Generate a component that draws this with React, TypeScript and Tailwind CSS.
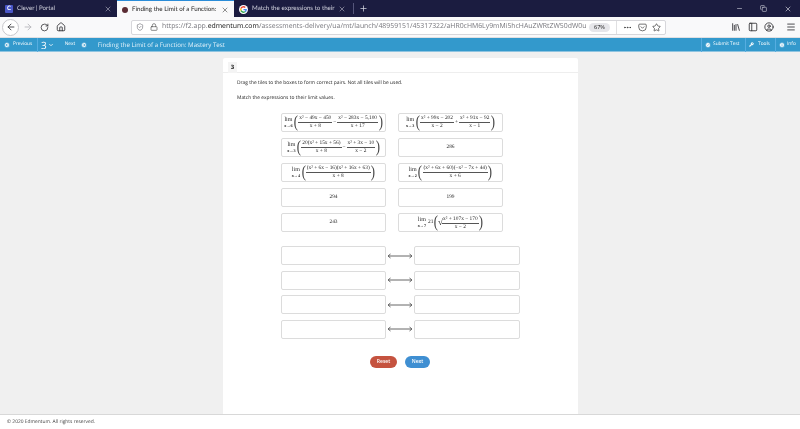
import React from "react";
import { ArrowLeft, ArrowRight, RotateCw, Home, Lock, ShieldCheck, Star, Menu, Minus, X, Plus, Copy, ChevronDown, Wrench, Info, CircleArrowLeft, CircleArrowRight, CircleCheck, CircleUser, PanelLeft, Library, Ellipsis, Pocket } from "lucide-react";

const serif = "font-['Liberation_Serif',serif]";

function Frac({ n, d }: { n: string; d: string }) {
  return (
    <span className="inline-flex flex-col items-center leading-[7px]">
      <span className="border-b border-[#555] px-[1px] whitespace-nowrap">{n}</span>
      <span className="whitespace-nowrap">{d}</span>
    </span>
  );
}

function Lim({ to }: { to: string }) {
  return (
    <span className="inline-flex flex-col items-center leading-[5px] shrink-0 mr-[1px]">
      <span className="text-[6px] leading-[6px]">lim</span>
      <span className="text-[4.2px] whitespace-nowrap font-semibold">{`x→${to}`}</span>
    </span>
  );
}

function Paren({ children }: { children: React.ReactNode }) {
  return (
    <span className="inline-flex items-center">
      <span className="text-[17px] leading-none font-thin scale-x-75 -mt-[2px] -mx-[0.5px] text-[#444]">(</span>
      {children}
      <span className="text-[17px] leading-none font-thin scale-x-75 -mt-[2px] -mx-[0.5px] text-[#444]">)</span>
    </span>
  );
}

function Tile({ children }: { children?: React.ReactNode }) {
  return (
    <div className={`w-[105px] h-[19px] shrink-0 rounded-[2px] border-[1.5px] border-[#dcdcdc] bg-white flex items-center justify-center text-[5.4px] text-[#2a2a2a] ${serif} overflow-hidden`}>
      {children}
    </div>
  );
}

function DropBox({ wide }: { wide?: boolean }) {
  return <div className={`${wide ? "w-[106px]" : "w-[105px]"} h-[19px] rounded-[2px] border-[1.5px] border-[#dcdcdc] bg-white`} />;
}

function Tab({ active, icon, label }: { active?: boolean; icon: React.ReactNode; label: string }) {
  return (
    <div className={`w-[117px] h-[18px] flex items-center pl-[5px] pr-[5px] gap-[4px] text-[6.2px] font-['Lato',sans-serif] ${active ? "bg-[#f9f9fa] text-[#222] border-t border-[#2a8cd8]" : "text-[#d4d5e0]"}`}>
      {icon}
      <span className="flex-1 min-w-0 whitespace-nowrap">{label}</span>
      <X size={8} strokeWidth={1.5} className="shrink-0" />
    </div>
  );
}

function BarSep() {
  return <span className="w-px h-[14px] bg-[#56ade0]" />;
}

function GoogleMark() {
  return (
    <svg width="9" height="9" viewBox="0 0 24 24" className="shrink-0">
      <circle cx="12" cy="12" r="12" fill="#fff" />
      <path d="M21 12.300c0-.7-.1-1.300-.2-1.900H12v3.600h5c-.2 1.200-.9 2.100-1.900 2.800l3 2.300c1.800-1.600 2.900-4 2.900-6.800z" fill="#4285f4" />
      <path d="M12 21c2.500 0 4.500-.8 6.100-2.200l-3-2.300c-.8.600-1.900.9-3.100.9-2.400 0-4.400-1.600-5.100-3.800l-3 2.400C5.400 19 8.500 21 12 21z" fill="#34a853" />
      <path d="M6.900 13.600c-.4-1.100-.4-2.200 0-3.300l-3-2.400a9 9 0 0 0 0 8.100z" fill="#fbbc05" />
      <path d="M12 6.600c1.300 0 2.500.5 3.400 1.300l2.600-2.600A9 9 0 0 0 3.900 7.900l3 2.400c.7-2.100 2.700-3.700 5.100-3.700z" fill="#ea4335" />
    </svg>
  );
}

const dot = { size: 6, fill: "white", color: "#3399cc", strokeWidth: 2.5 };

export default function App() {
  return (
    <div className="w-[800px] h-[429px] flex flex-col overflow-hidden bg-[#f0f0f0] font-['Open_Sans',sans-serif] [text-rendering:geometricPrecision] blur-[0.3px]">
      <div className="h-[17px] bg-[#1b1c40] flex items-start shrink-0 text-[#d4d5e0]">
        <Tab icon={<span className="w-[8px] h-[8px] bg-[#4a56c8] rounded-[1px] text-white text-[6px] leading-[8px] text-center font-bold shrink-0">C</span>} label="Clever | Portal" />
        <Tab active icon={<span className="w-[6px] h-[6px] rounded-full bg-[#5a2b33] shrink-0" />} label="Finding the Limit of a Function:" />
        <Tab icon={<GoogleMark />} label="Match the expressions to their" />
        <div className="w-px h-[11px] bg-[#55567a] mt-[3px] ml-[2px]" />
        <Plus size={9} className="ml-[5px] mt-[4px]" />
        <div className="flex-1" />
        <div className="flex items-center gap-[17px] pr-[8px] h-[17px]">
          <Minus size={7} />
          <Copy size={7} />
          <X size={8} />
        </div>
      </div>

      <div className="h-[21px] bg-[#f9f9fa] flex items-center shrink-0 text-[#2a2a2e] border-b border-[#e0e0e2]">
        <span className="ml-[2px] w-[17px] h-[17px] rounded-full border border-[#c8c8cc] bg-white flex items-center justify-center">
          <ArrowLeft size={10} />
        </span>
        <ArrowRight size={10} className="ml-[4px] text-[#b3b3b8]" />
        <RotateCw size={9} className="ml-[7px]" />
        <Home size={10} className="ml-[7px]" />
        <div className="ml-[65px] w-[535px] h-[15px] bg-white border border-[#d7d7db] rounded-[2px] flex items-center pl-[3px] text-[6.9px] text-[#77777d] whitespace-nowrap overflow-hidden">
          <ShieldCheck size={8} className="ml-[1px] shrink-0" />
          <Lock size={8} className="ml-[6px] shrink-0 text-[#555]" />
          <span className="ml-[4px] w-[424px]">
            https://f2.app.<span className="text-[#111]">edmentum.com</span>/assessments-delivery/ua/mt/launch/48959151/45317322/aHR0cHM6Ly9mMi5hcHAuZWRtZW50dW0u
          </span>
          <span className="ml-[3px] w-[21px] h-[9px] rounded-full bg-[#e6e6ea] text-[5.5px] leading-[9px] text-center text-[#222] shrink-0">67%</span>
          <span className="ml-[6px] w-px h-[13px] bg-[#e0e0e2] shrink-0" />
          <Ellipsis size={9} className="ml-[6px] shrink-0 text-[#333]" />
          <Pocket size={9} className="ml-[6px] shrink-0 text-[#444]" />
          <Star size={9} className="ml-[5px] shrink-0 text-[#444]" />
        </div>
        <Library size={10} className="ml-[65px]" />
        <PanelLeft size={10} className="ml-[7px]" />
        <CircleUser size={10} className="ml-[6px]" />
        <Menu size={10} className="ml-[12px]" />
      </div>

      <div className="h-[14px] bg-[#3399cc] flex items-center shrink-0 text-white text-[4.8px] border-b border-[#8fc4e0]">
        <CircleArrowLeft {...dot} className="ml-[4px]" />
        <span className="ml-[3px] w-[24px]">Previous</span>
        <BarSep />
        <span className="ml-[3px] text-[10px] leading-none">3</span>
        <ChevronDown size={6} className="ml-[1px]" strokeWidth={3} />
        <span className="ml-[5px]"><BarSep /></span>
        <span className="ml-[6px] w-[15px]">Next</span>
        <CircleArrowRight {...dot} className="ml-[1px]" />
        <span className="ml-[1px]"><BarSep /></span>
        <span className="ml-[10px] text-[6.2px] text-[#e3f2fa]">Finding the Limit of a Function: Mastery Test</span>
        <div className="flex-1" />
        <BarSep />
        <CircleCheck {...dot} className="ml-[3px]" />
        <span className="ml-[2px] w-[32px]">Submit Test</span>
        <BarSep />
        <Wrench size={5} fill="white" className="ml-[3px]" />
        <span className="ml-[4px] w-[17px]">Tools</span>
        <BarSep />
        <Info {...dot} className="ml-[3px]" />
        <span className="ml-[2px] w-[13px]">Info</span>
      </div>

      <main className="flex-1 flex justify-center pt-[6px] pl-[1px] min-h-0">
        <section className="w-[355px] h-[356px] bg-white rounded-t-[2px] flex flex-col">
          <div className="h-[15px] border-b border-[#eeeeee] pl-[5px] pt-[4px] shrink-0">
            <div className="w-[9px] h-[11px] bg-[#f4f4f4] text-[6px] font-bold text-[#222] text-center leading-[11px]">3</div>
          </div>
          <p className="ml-[14px] mt-[6px] text-[4.9px] leading-[8px] text-[#222]">Drag the tiles to the boxes to form correct pairs. Not all tiles will be used.</p>
          <p className="ml-[14px] mt-[7px] text-[4.9px] leading-[8px] text-[#222]">Match the expressions to their limit values.</p>

          <div className="ml-[58px] mt-[11px] grid grid-cols-[105px_105px] gap-x-[12px] gap-y-[6px]">
            <Tile>
              <Lim to="6" />
              <Paren>
                <Frac n="x² − 49x − 450" d="x + 8" />
                <span className="mx-[1px]">−</span>
                <Frac n="x² − 283x − 5,100" d="x + 17" />
              </Paren>
            </Tile>
            <Tile>
              <Lim to="3" />
              <Paren>
                <Frac n="x² + 99x − 202" d="x − 2" />
                <span className="mx-[1px]">+</span>
                <Frac n="x² + 91x − 92" d="x − 1" />
              </Paren>
            </Tile>
            <Tile>
              <Lim to="3" />
              <Paren>
                <Frac n="20(x² + 15x + 56)" d="x + 8" />
                <span className="mx-[1px]">−</span>
                <Frac n="x² + 3x − 10" d="x − 2" />
              </Paren>
            </Tile>
            <Tile>286</Tile>
            <Tile>
              <Lim to="4" />
              <Paren>
                <Frac n="(x² + 6x − 16)(x² + 16x + 63)" d="x + 8" />
              </Paren>
            </Tile>
            <Tile>
              <Lim to="2" />
              <Paren>
                <Frac n="(x² + 6x + 60)(−x² − 7x + 44)" d="x + 6" />
              </Paren>
            </Tile>
            <Tile>294</Tile>
            <Tile>199</Tile>
            <Tile>243</Tile>
            <Tile>
              <Lim to="7" />
              <span className="ml-[1px]">21</span>
              <Paren>
                <span className="text-[9px] leading-none">√</span>
                <span className="-ml-[1px]"><Frac n="x² + 107x − 170" d="x − 2" /></span>
              </Paren>
            </Tile>
          </div>

          <div className="ml-[58px] mt-[14px] w-[240px] flex flex-col gap-[5.5px]">
            {[0, 1, 2, 3].map((i) => (
              <div key={i} className="flex items-center">
                <DropBox />
                <svg width="28" height="6" viewBox="0 0 28 6" className="shrink-0">
                  <path d="M2 3H26M4.500 1 2 3l2.500 2M23.500 1 26 3l-2.500 2" fill="none" stroke="#666" strokeWidth="1" />
                </svg>
                <DropBox wide />
              </div>
            ))}
          </div>

          <div className="mt-[17px] ml-[147px] flex gap-[8px] text-[5px] font-semibold text-white">
            <button className="w-[27px] h-[12px] rounded-full bg-[#c5533f]">Reset</button>
            <button className="w-[25px] h-[12px] rounded-full bg-[#3f8fd2]">Next</button>
          </div>
        </section>
      </main>

      <footer className="h-[15px] bg-white border-t border-[#d8d8d8] shrink-0 pl-[7px] text-[4.9px] leading-[14px] text-[#444]">
        © 2020 Edmentum. All rights reserved.
      </footer>
    </div>
  );
}
